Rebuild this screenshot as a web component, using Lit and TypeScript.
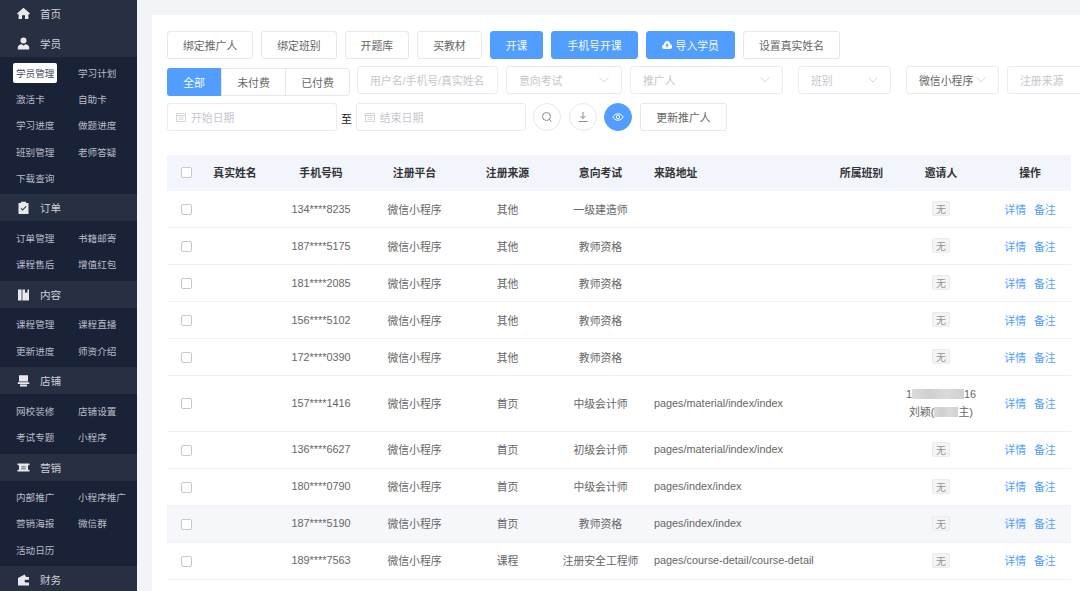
import { LitElement, html, css, svg } from "lit";
import { customElement } from "lit/decorators.js";

const icons: Record<string, unknown> = {
  home: svg`<path d="M6.5 .8 0 6.4 1 7.4 1.6 6.9V12H5V8.2H8V12H11.4V6.9L12 7.4 13 6.4Z"/>`,
  user: svg`<circle cx="6.5" cy="3.4" r="3"/><path d="M.8 12.6V10.4C.8 8.4 2.8 7.4 4.4 7.2L6.5 8.6 8.6 7.2C10.2 7.4 12.2 8.4 12.2 10.4V12.6Z"/>`,
  order: svg`<path fill-rule="evenodd" d="M1.5 2H4V.8H9V2H11.5V13H1.5ZM3.6 7.6 5.6 9.8 9.6 5.6 8.8 4.9 5.6 8.2 4.4 6.9Z"/>`,
  book: svg`<path d="M1 1.5H4.6V12.5H1ZM5.4 1.5H12V12.5H5.4ZM8 1.5V5L9.2 4.2 10.4 5V1.5Z" fill-rule="evenodd"/>`,
  shop: svg`<path d="M2 1.2H11V7.4H2ZM.8 8.2H12.2V10H.8ZM3 10.6H10V12.6H3Z"/>`,
  mark: svg`<path fill-rule="evenodd" d="M.5 2.600H12.500V4.200H11V8.800H12.500V10.500H.5V8.800H2V4.200H.5ZM4.300 5.400V6.200H8.700V5.400ZM4.300 7.400V8.200H8.700V7.400Z"/>`,
  wallet: svg`<path d="M1 5 7.6 1.6 9.2 4H12V6.8H8.6C7.2 6.8 7.2 9.4 8.6 9.4H12V12.4H1Z"/>`,
};

const groups = [
  { t: "首页", i: "home", items: [] as string[], first: true },
  { t: "学员", i: "user", items: ["学员管理", "学习计划", "激活卡", "自助卡", "学习进度", "做题进度", "班别管理", "老师答疑", "下载查询"] },
  { t: "订单", i: "order", items: ["订单管理", "书籍邮寄", "课程售后", "增值红包"] },
  { t: "内容", i: "book", items: ["课程管理", "课程直播", "更新进度", "师资介绍"] },
  { t: "店铺", i: "shop", items: ["网校装修", "店铺设置", "考试专题", "小程序"] },
  { t: "营销", i: "mark", items: ["内部推广", "小程序推广", "营销海报", "微信群", "活动日历"] },
  { t: "财务", i: "wallet", items: [] as string[] },
];

const rows = [
  ["134****8235", "其他", "一级建造师", ""],
  ["187****5175", "其他", "教师资格", ""],
  ["181****2085", "其他", "教师资格", ""],
  ["156****5102", "其他", "教师资格", ""],
  ["172****0390", "其他", "教师资格", ""],
  ["157****1416", "首页", "中级会计师", "pages/material/index/index"],
  ["136****6627", "首页", "初级会计师", "pages/material/index/index"],
  ["180****0790", "首页", "中级会计师", "pages/index/index"],
  ["187****5190", "首页", "教师资格", "pages/index/index"],
  ["189****7563", "课程", "注册安全工程师", "pages/course-detail/course-detail"],
];

const chevron = html`<svg class="chev" viewBox="0 0 10 6"><path d="M.5 .5 5 5 9.5 .5"/></svg>`;
const cal = html`<svg class="cal" viewBox="0 0 10 10"><path d="M.5 1.5H9.5V9.5H.5ZM.5 3.5H9.5M2.5 5.2H7.5M2.5 7.2H7.5"/></svg>`;

@customElement("app-root")
export class AppRoot extends LitElement {
  static styles = css`
    :host { display: flex; width: 100vw; height: 100vh; overflow: hidden; background: #f3f4f8;
      font-family: "Liberation Sans", "Noto Sans CJK SC", sans-serif; font-size: 10.85px; color: #666; }
    * { box-sizing: border-box; }
    .side { width: 137px; flex: none; background: #1a2238; overflow: hidden; font-size: 10.6px; }
    .gh { height: 27px; display: flex; align-items: center; padding-left: 17px; gap: 10px; background: #272f42; color: #cfd2d8; }
    .gh.first { height: 29.5px; padding-bottom: 3px; }
    .gh svg { width: 13px; height: 13px; fill: #e8e9ec; flex: none; }
    .gi { display: grid; grid-template-columns: 62px 1fr; grid-auto-rows: 26.2px; padding: 3.5px 0 3.5px 13px; font-size: 9.6px; color: #b9bdc7; }
    .si { display: flex; align-items: center; }
    .si span { padding: 0 3px; height: 20px; display: flex; align-items: center; border-radius: 2px; white-space: nowrap; }
    .si.on span { background: #fff; color: #3f4a63; }
    .main { flex: 1; min-width: 0; padding: 15px 0 0 15px; }
    .card { height: 100%; background: #fff; padding: 16px 0 0 15px; overflow: hidden; }
    .bar { display: flex; align-items: flex-start; white-space: nowrap; }
    .bar.r1 { gap: 8px; }
    .bar.r2 { margin-top: 7px; gap: 8px; }
    .bar.r3 { margin-top: 7px; gap: 7px; align-items: center; }
    .btn { height: 28px; padding: 0 15px; border: 1px solid #e6e8ee; border-radius: 3px; background: #fff; color: #666; display: flex; align-items: center; gap: 4px; }
    .btn.pri { background: #519eff; border-color: #519eff; color: #f3f8ff; }
    .btn svg { width: 10px; height: 8px; fill: #fff; }
    .seg { display: flex; height: 28px; margin: 2px -1px 0 0; border: 1px solid #e6e8ee; border-radius: 3px; }
    .seg span { display: flex; align-items: center; justify-content: center; border-left: 1px solid #e6e8ee; width: 64px; }
    .seg span:first-child { width: 54px; margin: -1px 0 -1px -1px; border: 0; background: #519eff; color: #f3f8ff; border-radius: 3px 0 0 3px; }
    .inp { height: 28px; flex: none; border: 1px solid #e9ebf0; border-radius: 3px; display: flex; align-items: center; justify-content: space-between; padding: 0 12px; color: #c4c7ce; }
    .inp.val { color: #666; }
    .w141 { width: 141px; } .w116 { width: 116px; } .w153 { width: 153px; margin-right: 7px; }
    .w93 { width: 93px; } .w93.sp { margin-right: 7px; } .w100 { width: 100px; }
    .inp.date { width: 170px; justify-content: flex-start; padding: 0 8px; gap: 5px; }
    .chev { width: 10px; height: 6px; fill: none; stroke: #c9ccd3; stroke-width: .8; flex: none; }
    .cal { width: 10px; height: 10px; fill: none; stroke: #c9ccd3; stroke-width: .8; flex: none; }
    .to { color: #222; margin: 0 -3px -1px -3px; }
    .round { width: 28px; height: 28px; border-radius: 50%; border: 1px solid #e6e8ee; display: flex; align-items: center; justify-content: center; flex: none; }
    .round.mg { margin-left: 1px; }
    .round svg { width: 12px; height: 12px; fill: none; stroke: #858a94; stroke-width: 1; }
    .round.pri { background: #519eff; border-color: #519eff; }
    .round.pri svg { stroke: #fff; }
    .r3 .btn { margin-left: 1px; padding: 0 15.5px; }
    .table { margin-top: 24px; width: 904px; }
    .tr { display: grid; grid-template-columns: 29px 78px 94px 93px 93px 93px 183px 63px 96px 82px; align-items: center; height: 37px; padding-bottom: 1px; border-bottom: 1px solid #eff0f5; text-align: center; white-space: nowrap; }
    .tr.head { height: 36px; padding-bottom: 2px; background: #f2f5fc; border: 0; color: #333; font-weight: 700; }
    .tr.tall { height: 55.5px; }
    .tr.hover { background: #f5f7fa; }
    .url { text-align: left; padding-left: 7px; }
    .chk { width: 11px; height: 11px; margin-left: 14px; border: 1px solid #c4c7cc; border-radius: 2px; background: #fff; }
    .tr:not(.head) .chk { margin-top: 2px; }
    .tag { display: inline-flex; align-items: center; justify-content: center; width: 18px; height: 15px; vertical-align: middle; background: #f4f4f5; border: 1px solid #ebebed; border-radius: 2px; color: #909399; font-size: 10px; }
    .inv { line-height: 18px; }
    .smudge { display: inline-block; height: 10px; vertical-align: -1px; background: linear-gradient(90deg, #dcdcdc, #cfcfcf, #dadada, #d0d0d0); }
    .s1 { width: 52px; } .s2 { width: 24px; }
    .ops { display: flex; justify-content: center; gap: 8px; color: #519eff; }
  `;

  private row(r: string[], i: number) {
    const tall = i === 5;
    return html`<div class="tr ${tall ? "tall" : ""} ${i === 8 ? "hover" : ""}">
      <div class="chk"></div><div></div><div>${r[0]}</div><div>微信小程序</div><div>${r[1]}</div><div>${r[2]}</div>
      <div class="url">${r[3]}</div><div></div>
      <div>${tall
        ? html`<div class="inv">1<span class="smudge s1"></span>16<br />刘颖(<span class="smudge s2"></span>主)</div>`
        : html`<span class="tag">无</span>`}</div>
      <div class="ops"><span>详情</span><span>备注</span></div>
    </div>`;
  }

  render() {
    return html`
      <nav class="side">
        ${groups.map((g) => html`
          <div class="gh ${g.first ? "first" : ""}"><svg viewBox="0 0 13 13">${icons[g.i]}</svg><span>${g.t}</span></div>
          ${g.items.length ? html`<div class="gi">${g.items.map((s) => html`<div class="si ${s === "学员管理" ? "on" : ""}"><span>${s}</span></div>`)}</div>` : ""}
        `)}
      </nav>
      <div class="main"><div class="card">
        <div class="bar r1">
          <div class="btn">绑定推广人</div><div class="btn">绑定班别</div><div class="btn">开题库</div><div class="btn">买教材</div>
          <div class="btn pri">开课</div><div class="btn pri">手机号开课</div>
          <div class="btn pri"><svg viewBox="0 0 10 8"><path fill-rule="evenodd" d="M2.4 8C1 8 0 7 0 5.7S.9 3.5 2 3.4C2.3 1.4 3.6 0 5.2 0 7 0 8.2 1.3 8.3 3.3 9.3 3.5 10 4.5 10 5.7 10 7 9 8 7.8 8ZM5 2.4 3 4.6H4.4V6.4H5.6V4.6H7Z"/></svg>导入学员</div>
          <div class="btn">设置真实姓名</div>
        </div>
        <div class="bar r2">
          <div class="seg"><span>全部</span><span>未付费</span><span>已付费</span></div>
          <div class="inp w141">用户名/手机号/真实姓名</div>
          <div class="inp w116">意向考试${chevron}</div>
          <div class="inp w153">推广人${chevron}</div>
          <div class="inp w93 sp">班别${chevron}</div>
          <div class="inp val w93">微信小程序${chevron}</div>
          <div class="inp w100">注册来源</div>
        </div>
        <div class="bar r3">
          <div class="inp date">${cal}开始日期</div>
          <span class="to">至</span>
          <div class="inp date">${cal}结束日期</div>
          <div class="round"><svg viewBox="0 0 12 12"><circle cx="5.5" cy="5.5" r="4"/><path d="M8.3 8.3 10.5 10.5"/></svg></div>
          <div class="round mg"><svg viewBox="0 0 12 12"><path d="M6 1V7.5M3.5 5 6 7.5 8.5 5M1.5 10.5H10.5"/></svg></div>
          <div class="round pri"><svg viewBox="0 0 12 12"><path d="M.8 6C2 3.9 3.9 2.8 6 2.8S10 3.9 11.2 6C10 8.1 8.1 9.2 6 9.2S2 8.1 .8 6Z"/><circle cx="6" cy="6" r="1.7"/></svg></div>
          <div class="btn">更新推广人</div>
        </div>
        <div class="table">
          <div class="tr head"><div class="chk"></div><div>真实姓名</div><div>手机号码</div><div>注册平台</div><div>注册来源</div><div>意向考试</div><div class="url">来路地址</div><div>所属班别</div><div>邀请人</div><div>操作</div></div>
          ${rows.map((r, i) => this.row(r, i))}
        </div>
      </div></div>
    `;
  }
}
